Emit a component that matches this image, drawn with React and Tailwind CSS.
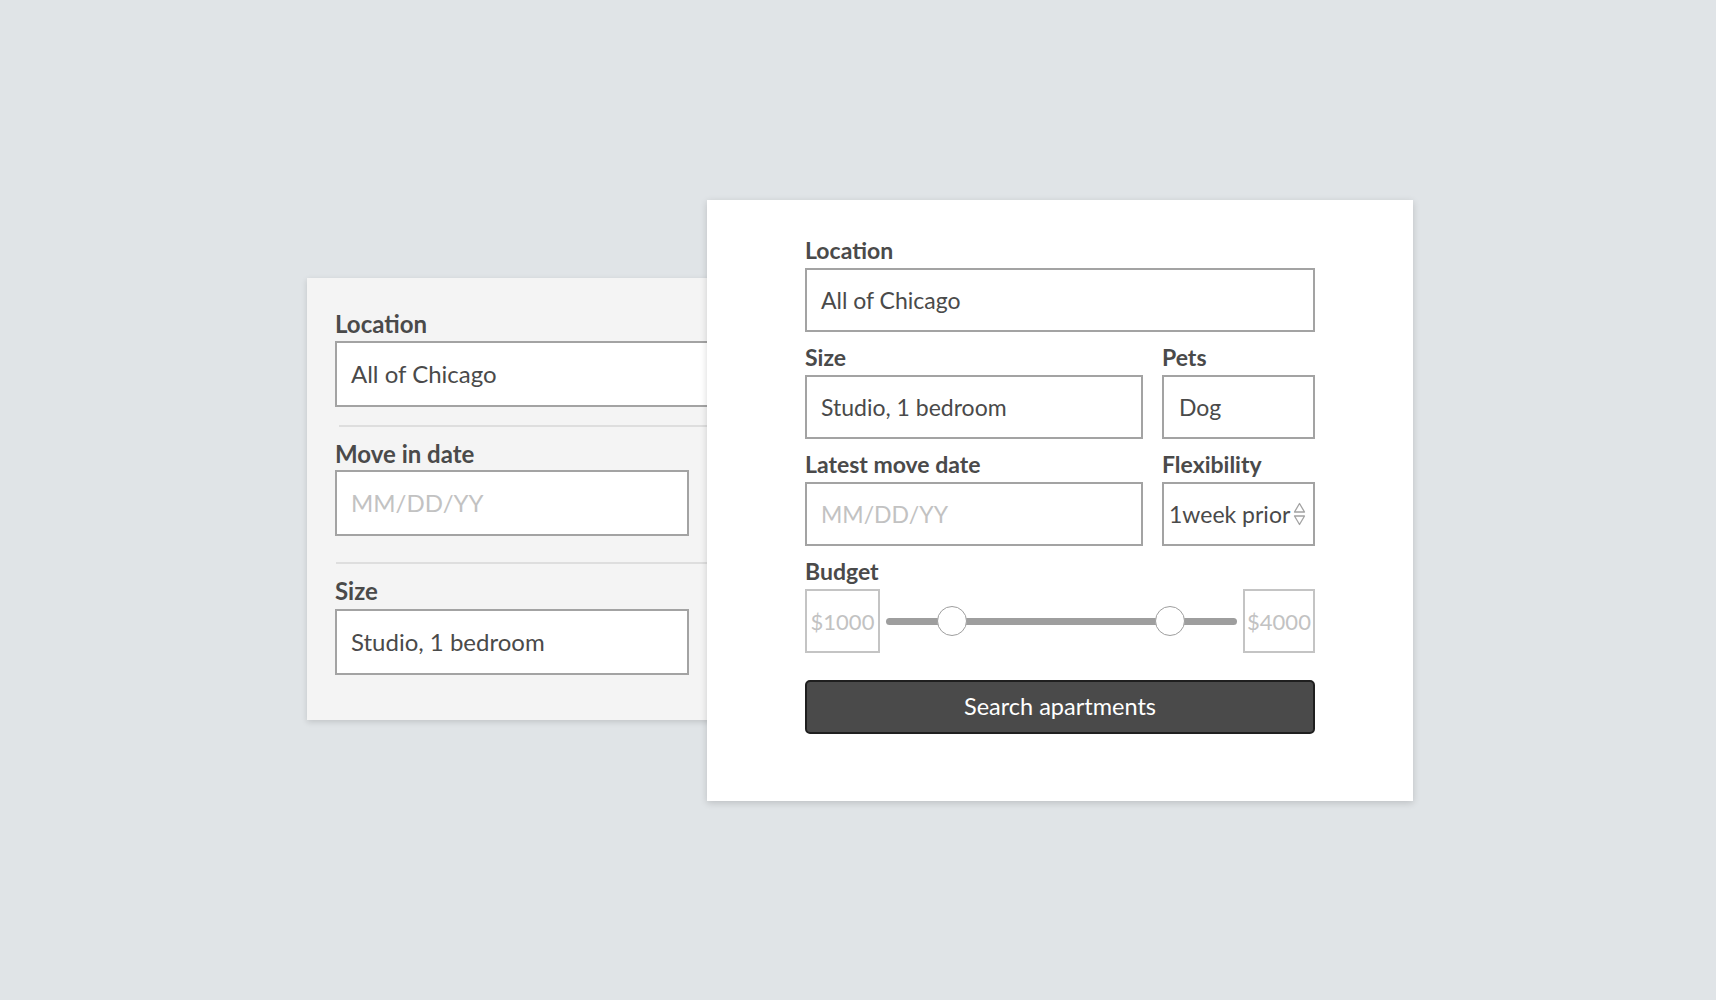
import React from 'react';

const font = { fontFamily: 'Lato, "Noto Sans", sans-serif' };

const SpinArrows = () => (
  <svg width="13" height="24" viewBox="0 0 13 24" className="shrink-0">
    <path d="M6.5 1.5 L11.5 10 L1.5 10 Z" fill="none" stroke="#a3a3a3" strokeWidth="1.3" strokeLinejoin="round" />
    <path d="M6.5 22.5 L11.5 14 L1.5 14 Z" fill="none" stroke="#a3a3a3" strokeWidth="1.3" strokeLinejoin="round" />
  </svg>
);

const LeftCard = () => (
  <div className="w-[440px] shrink-0 mt-[78px] bg-[#f4f4f4] pl-[28px] pt-[31px] pb-[45px] shadow-[0_2px_6px_rgba(0,0,0,0.14)]">
    <div className="text-[24px] leading-[29px] font-bold text-[#4a4a4a]">Location</div>
    <div className="mt-[3px] h-[66px] border-2 border-[#a3a3a3] bg-white flex items-center pl-[14px] text-[24px] text-[#4a4a4a]">
      All of Chicago
    </div>
    <div className="mt-[18px] ml-[4px] h-[2px] bg-[#dedede]" />
    <div className="mt-[12px] text-[24px] leading-[29px] font-bold text-[#4a4a4a]">Move in date</div>
    <div className="mt-[2px] w-[354px] h-[66px] border-2 border-[#a3a3a3] bg-white flex items-center pl-[14px] text-[24px] text-[#c2c2c2]">
      MM/DD/YY
    </div>
    <div className="mt-[26px] ml-[1px] h-[2px] bg-[#dedede]" />
    <div className="mt-[12px] text-[24px] leading-[29px] font-bold text-[#4a4a4a]">Size</div>
    <div className="mt-[4px] w-[354px] h-[66px] border-2 border-[#a3a3a3] bg-white flex items-center pl-[14px] text-[24px] text-[#4a4a4a]">
      Studio, 1 bedroom
    </div>
  </div>
);

const Label = ({ children, className = '' }) => (
  <div className={`text-[23px] leading-[27px] font-bold text-[#4a4a4a] ${className}`}>{children}</div>
);

const Field = ({ children, placeholder, className = '' }) => (
  <div
    className={`mt-[4px] h-[64px] border-2 border-[#a3a3a3] bg-white flex items-center text-[23px] ${
      placeholder ? 'text-[#c2c2c2]' : 'text-[#4a4a4a]'
    } ${className}`}
  >
    {children}
  </div>
);

const RightCard = () => (
  <div className="relative z-10 -ml-[40px] w-[706px] shrink-0 bg-white pt-[37px] pb-[67px] px-[98px] shadow-[0_2px_7px_rgba(0,0,0,0.16)]">
    <Label>Location</Label>
    <Field className="pl-[14px]">All of Chicago</Field>

    <div className="mt-[12px] flex gap-[19px]">
      <div className="w-[338px]">
        <Label>Size</Label>
        <Field className="pl-[14px]">Studio, 1 bedroom</Field>
      </div>
      <div className="flex-1">
        <Label>Pets</Label>
        <Field className="pl-[15px]">Dog</Field>
      </div>
    </div>

    <div className="mt-[12px] flex gap-[19px]">
      <div className="w-[338px]">
        <Label>Latest move date</Label>
        <Field placeholder className="pl-[14px]">MM/DD/YY</Field>
      </div>
      <div className="flex-1">
        <Label>Flexibility</Label>
        <Field className="pl-[5px] pr-[7px] justify-between">
          <span>1week prior</span>
          <SpinArrows />
        </Field>
      </div>
    </div>

    <Label className="mt-[12px]">Budget</Label>
    <div className="mt-[4px] flex items-center">
      <div className="w-[75px] h-[64px] border-2 border-[#c4c4c4] flex items-center justify-center text-[22px] text-[#c2c2c2]">
        $1000
      </div>
      <div className="relative flex-1 mx-[6px] h-[30px] flex items-center">
        <div className="h-[7px] w-full rounded-full bg-[#9e9e9e]" />
        <div className="absolute left-[51px] top-0 w-[30px] h-[30px] rounded-full bg-white border-[1.5px] border-[#9e9e9e]" />
        <div className="absolute left-[269px] top-0 w-[30px] h-[30px] rounded-full bg-white border-[1.5px] border-[#9e9e9e]" />
      </div>
      <div className="w-[72px] h-[64px] border-2 border-[#c4c4c4] flex items-center justify-center text-[22px] text-[#c2c2c2]">
        $4000
      </div>
    </div>

    <button className="mt-[27px] w-full h-[54px] rounded-[5px] bg-[#4a4a4a] border-2 border-[#1f1f1f] text-white text-[23.5px] flex items-center justify-center">
      Search apartments
    </button>
  </div>
);

export default function App() {
  return (
    <div style={font} className="w-full h-[1000px] bg-[#e0e4e7] overflow-hidden">
      <div className="flex items-start pl-[307px] pt-[200px]">
        <LeftCard />
        <RightCard />
      </div>
    </div>
  );
}
